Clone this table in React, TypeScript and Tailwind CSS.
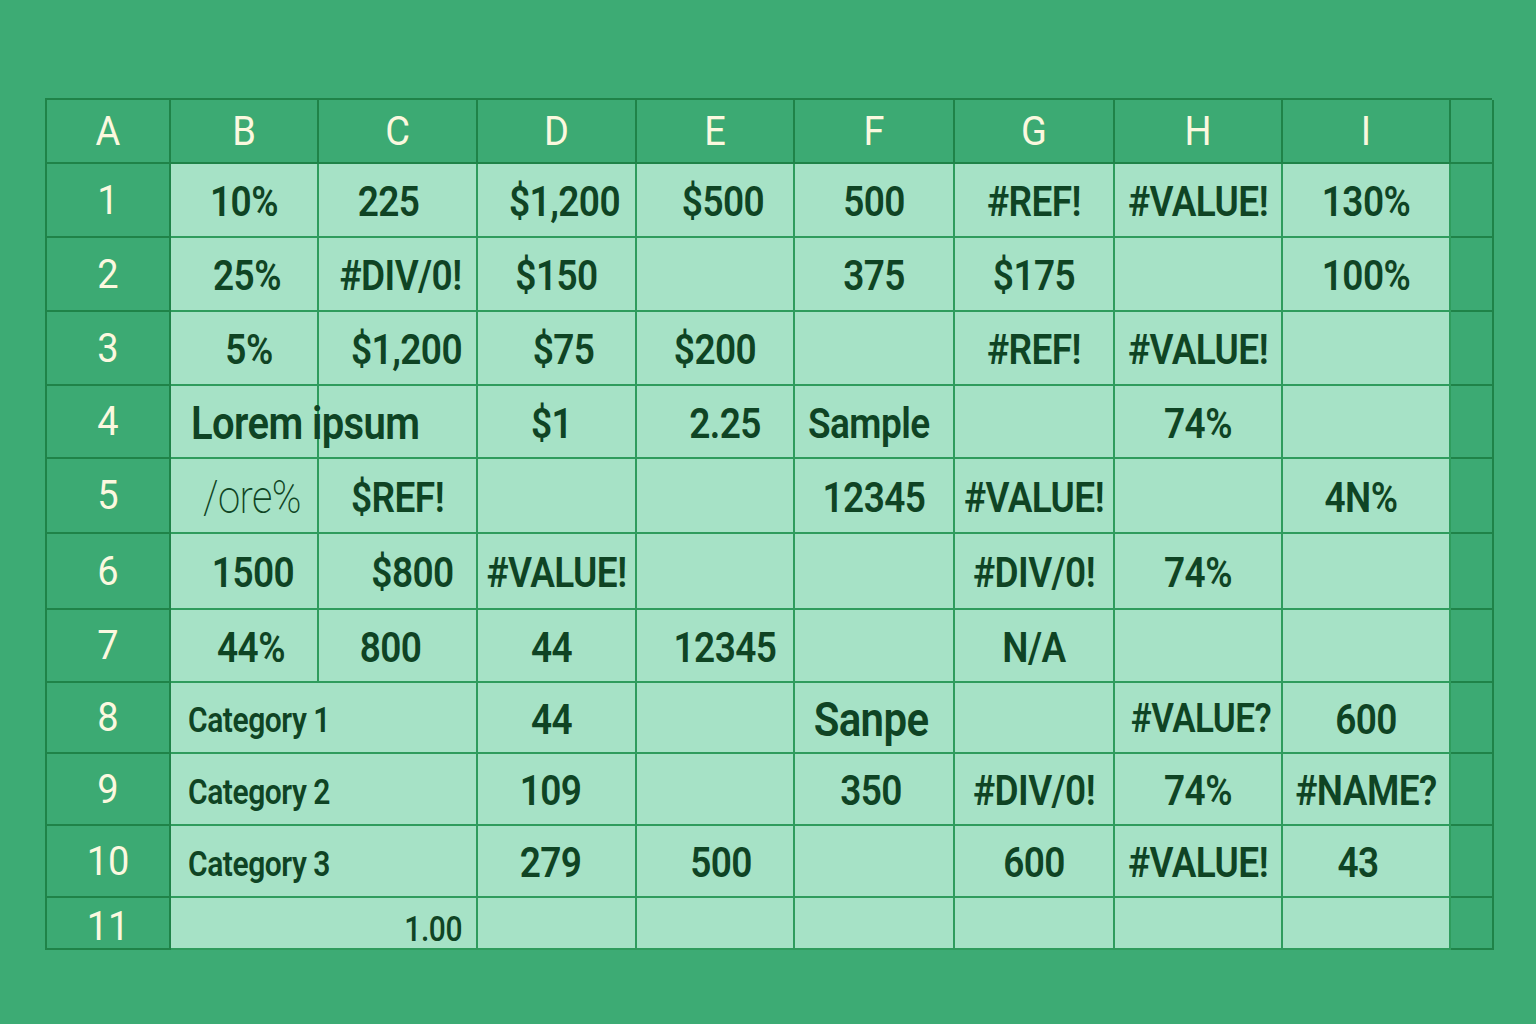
const cols = ["A", "B", "C", "D", "E", "F", "G", "H", "I"];

type Cell = { t?: string; span?: boolean; cls?: string; size?: string; weight?: string };

// row heights follow the picture
const rowH = [
  "h-[74px]",
  "h-[74px]",
  "h-[74px]",
  "h-[73px]",
  "h-[75px]",
  "h-[76px]",
  "h-[73px]",
  "h-[71px]",
  "h-[72px]",
  "h-[72px]",
  "h-[52px]",
];

const rows: Cell[][] = [
  [
    { t: "10%" },
    { t: "225", cls: "pr-[18px]" },
    { t: "$1,200", cls: "pl-[16px]" },
    { t: "$500", cls: "pl-[16px]" },
    { t: "500" },
    { t: "#REF!" },
    { t: "#VALUE!" },
    { t: "130%" },
  ],
  [
    { t: "25%", cls: "pl-[6px]" },
    { t: "#DIV/0!", cls: "pl-[6px]" },
    { t: "$150" },
    {},
    { t: "375" },
    { t: "$175" },
    {},
    { t: "100%" },
  ],
  [
    { t: "5%", cls: "pl-[10px]" },
    { t: "$1,200", cls: "pl-[18px]" },
    { t: "$75", cls: "pl-[14px]" },
    { t: "$200" },
    {},
    { t: "#REF!" },
    { t: "#VALUE!" },
    {},
  ],
  [
    { t: "Lorem ipsum", cls: "relative z-10 justify-start pl-[20px]", size: "text-[40px]" },
    {},
    { t: "$1", cls: "pr-[10px]" },
    { t: "2.25", cls: "pl-[20px]" },
    { t: "Sample", cls: "justify-start pl-[13px]" },
    {},
    { t: "74%" },
    {},
  ],
  [
    { t: "/ore%", cls: "pl-[16px]", weight: "font-extralight", size: "text-[40px]" },
    { t: "$REF!" },
    {},
    {},
    { t: "12345" },
    { t: "#VALUE!" },
    {},
    { t: "4N%", cls: "pr-[10px]" },
  ],
  [
    { t: "1500", cls: "pl-[18px]" },
    { t: "$800", cls: "pl-[30px]" },
    { t: "#VALUE!" },
    {},
    {},
    { t: "#DIV/0!" },
    { t: "74%" },
    {},
  ],
  [
    { t: "44%", cls: "pl-[14px]" },
    { t: "800", cls: "pr-[14px]" },
    { t: "44", cls: "pr-[10px]" },
    { t: "12345", cls: "pl-[20px]" },
    {},
    { t: "N/A" },
    {},
    {},
  ],
  [
    { t: "Category 1", span: true, cls: "justify-start pl-[17px]", size: "text-[30px]" },
    { t: "44", cls: "pr-[10px]" },
    {},
    { t: "Sanpe", cls: "pr-[6px]", size: "text-[42px]" },
    {},
    { t: "#VALUE?", cls: "pl-[6px]", size: "text-[35px]" },
    { t: "600" },
  ],
  [
    { t: "Category 2", span: true, cls: "justify-start pl-[17px]", size: "text-[30px]" },
    { t: "109", cls: "pr-[12px]" },
    {},
    { t: "350", cls: "pr-[6px]" },
    { t: "#DIV/0!" },
    { t: "74%" },
    { t: "#NAME?" },
  ],
  [
    { t: "Category 3", span: true, cls: "justify-start pl-[17px]", size: "text-[30px]" },
    { t: "279", cls: "pr-[12px]" },
    { t: "500", cls: "pl-[12px]" },
    {},
    { t: "600" },
    { t: "#VALUE!" },
    { t: "43", cls: "pr-[16px]" },
  ],
  [
    { t: "1.00", span: true, cls: "justify-end pr-[14px] pt-[6px]", size: "text-[30px]", weight: "font-medium" },
    {},
    {},
    {},
    {},
    {},
    {},
  ],
];

const App = () => {
  return (
    <div className="w-[1536px] h-[1024px] bg-[#3dab74] pl-[45px] pt-[98px] font-['Roboto',sans-serif]">
      <div className="grid grid-cols-[124px_148px_159px_159px_158px_160px_160px_168px_168px_43px] border-l-2 border-t-2 border-[#1f8348] w-[1447px]">
        {/* column letters */}
        {cols.map((c) => (
          <div
            key={c}
            className="h-[64px] flex items-center justify-center border-r-2 border-b-2 border-[#1f8348] bg-[#3caa73] text-[#fbf8df] text-[38px] font-normal"
          >
            <span className="inline-block scale-y-[1.08]">{c}</span>
          </div>
        ))}
        <div className="h-[64px] border-r-2 border-b-2 border-[#1f8348] bg-[#3caa73]" />

        {rows.map((row, r) => (
          <div key={r} className="contents">
            <div
              className={`${rowH[r]} flex items-center justify-center border-r-2 border-b-2 border-[#1f8348] bg-[#3caa73] text-[#fbf8df] text-[38px] font-normal ${r === 10 ? "pt-[6px]" : ""}`}
            >
              <span className="inline-block scale-y-[1.08]">{r + 1}</span>
            </div>
            {row.map((cell, i) => (
              <div
                key={i}
                className={`${rowH[r]} ${cell.span ? "col-span-2" : ""} flex items-center justify-center whitespace-nowrap border-r-2 border-b-2 border-[#2f9c5d] bg-[#a6e2c6] text-[#0f4424] tracking-[-0.015em] ${cell.size ?? "text-[37px]"} ${cell.weight ?? "font-semibold"} ${cell.cls ?? ""}`}
              >
                {cell.t && <span className="inline-block pt-[4px] scale-y-[1.15]">{cell.t}</span>}
              </div>
            ))}
            <div className={`${rowH[r]} border-r-2 border-b-2 border-[#1f8348] bg-[#3caa73]`} />
          </div>
        ))}
      </div>
    </div>
  );
};

export default App;
